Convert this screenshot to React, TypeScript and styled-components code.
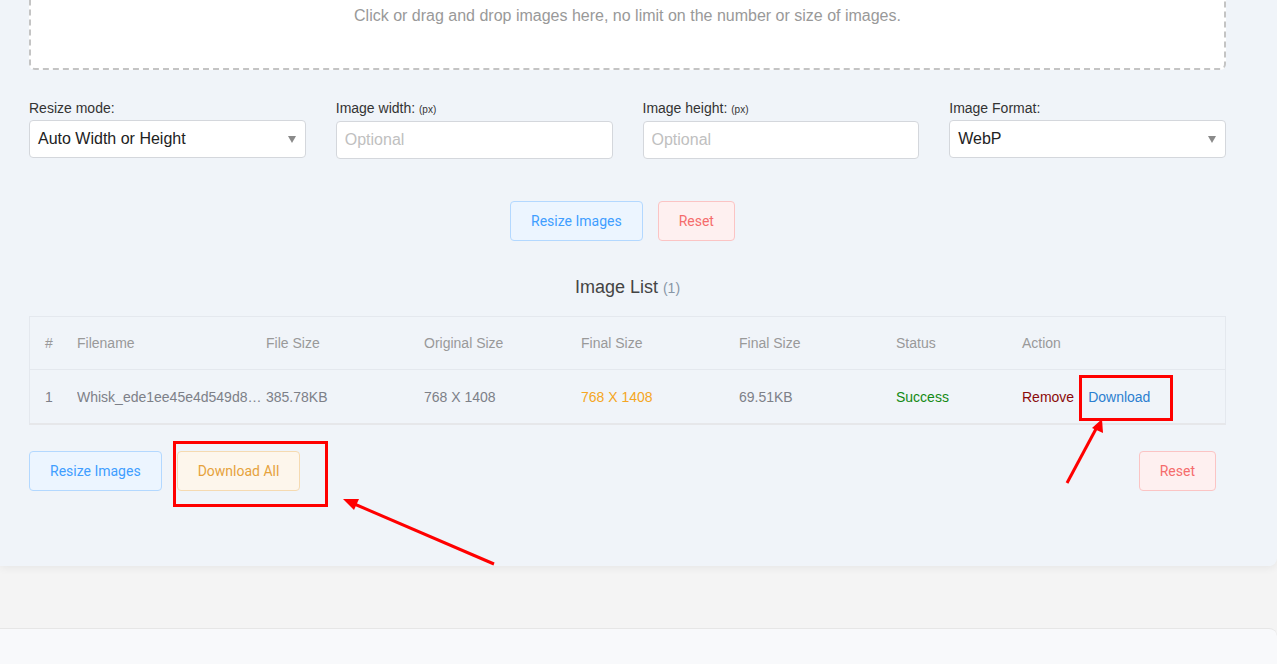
import React from 'react';
import styled, { createGlobalStyle } from 'styled-components';

const GlobalStyle = createGlobalStyle`
  html, body {
    margin: 0;
    padding: 0;
    background: #f4f4f4;
    font-family: "Liberation Sans", Arial, sans-serif;
    overflow: hidden;
  }
`;

type Tone = 'primary' | 'danger' | 'warning';

const tones: Record<Tone, { bg: string; border: string; color: string }> = {
  primary: { bg: '#ecf5ff', border: '#b3d8ff', color: '#409eff' },
  danger: { bg: '#fef0f0', border: '#fbc4c4', color: '#f56c6c' },
  warning: { bg: '#fdf6ec', border: '#f5dab1', color: '#e6a23c' },
};

const columns = ['#', 'Filename', 'File Size', 'Original Size', 'Final Size', 'Final Size', 'Status', 'Action'];

export default function App() {
  return (
    <>
      <GlobalStyle />
      <Page>
        <Card>
          <DropZone>Click or drag and drop images here, no limit on the number or size of images.</DropZone>

          <FormRow>
            <Field>
              <Label>Resize mode:</Label>
              <SelectBox>
                <span>Auto Width or Height</span>
                <Caret />
              </SelectBox>
            </Field>
            <Field>
              <Label>
                Image width: <small>(px)</small>
              </Label>
              <TextInput placeholder="Optional" />
            </Field>
            <Field>
              <Label>
                Image height: <small>(px)</small>
              </Label>
              <TextInput placeholder="Optional" />
            </Field>
            <Field>
              <Label>Image Format:</Label>
              <SelectBox>
                <span>WebP</span>
                <Caret />
              </SelectBox>
            </Field>
          </FormRow>

          <ButtonRow $align="center" $top={42}>
            <Button $tone="primary">Resize Images</Button>
            <Button $tone="danger">Reset</Button>
          </ButtonRow>

          <ListTitle>
            Image List <span>(1)</span>
          </ListTitle>

          <Table>
            <HeadRow>
              {columns.map((c, i) => (
                <Cell key={i}>{c}</Cell>
              ))}
            </HeadRow>
            <BodyRow>
              <Cell>1</Cell>
              <Cell $ellipsis>Whisk_ede1ee45e4d549d8…</Cell>
              <Cell>385.78KB</Cell>
              <Cell>768 X 1408</Cell>
              <Cell $color="#f5a623">768 X 1408</Cell>
              <Cell>69.51KB</Cell>
              <Cell $color="#138a13">Success</Cell>
              <Cell>
                <ActionLink $color="#8b0a0a">Remove</ActionLink>
                <ActionLink $color="#2c7fd0">Download</ActionLink>
              </Cell>
            </BodyRow>
          </Table>

          <ButtonRow $align="space-between" $top={26}>
            <Group>
              <Button $tone="primary">Resize Images</Button>
              <Button $tone="warning">Download All</Button>
            </Group>
            <Button $tone="danger">Reset</Button>
          </ButtonRow>
        </Card>
        <Footer />
      </Page>

      <Annotations width="1277" height="664" viewBox="0 0 1277 664">
        <g fill="none" stroke="#ff0000" strokeWidth="3">
          <rect x="174.5" y="442.5" width="152" height="63" />
          <rect x="1080.5" y="376.5" width="91" height="43" />
          <line x1="494" y1="564" x2="352" y2="503" />
          <line x1="1067" y1="483" x2="1097" y2="427" />
        </g>
        <g fill="#ff0000">
          <polygon points="343,499 359,499 354,510" />
          <polygon points="1102,419 1103,433 1092,428" />
        </g>
      </Annotations>
    </>
  );
}

const Page = styled.div`
  margin-top: -95px;
`;

const Card = styled.div`
  background: #f0f4f9;
  border-radius: 0 8px 8px 0;
  box-shadow: 0 2px 8px rgba(0, 0, 0, 0.06);
  padding: 0 51px 75px 29px;
`;

const DropZone = styled.div`
  height: 165px;
  box-sizing: border-box;
  background: #fff;
  border: 2px dashed #c4c4c4;
  border-top: none;
  border-radius: 0 0 6px 6px;
  color: #999;
  font-size: 16px;
  text-align: center;
  padding-top: 102px;
`;

const FormRow = styled.div`
  display: grid;
  grid-template-columns: repeat(4, 1fr);
  gap: 30px;
  margin-top: 30px;
`;

const Field = styled.div`
  display: flex;
  flex-direction: column;
  gap: 3px;
`;

const Label = styled.label`
  font-size: 14px;
  line-height: 17px;
  color: #333;
  small {
    font-size: 10px;
  }
`;

const SelectBox = styled.div`
  height: 38px;
  box-sizing: border-box;
  border: 1px solid #d4d7dc;
  border-radius: 4px;
  background: #fff;
  display: flex;
  align-items: center;
  justify-content: space-between;
  padding: 0 9px 0 8px;
  font-size: 16px;
  color: #222;
`;

const Caret = styled.span`
  width: 0;
  height: 0;
  border-left: 4px solid transparent;
  border-right: 4px solid transparent;
  border-top: 7px solid #8a8a8a;
`;

const TextInput = styled.input`
  height: 38px;
  box-sizing: border-box;
  border: 1px solid #d4d7dc;
  border-radius: 4px;
  background: #fff;
  padding: 0 9px 0 8px;
  font-family: "Liberation Sans", Arial, sans-serif;
  font-size: 16px;
  color: #222;
  outline: none;
  &::placeholder {
    color: #c0c0c0;
  }
`;

const ButtonRow = styled.div<{ $align: string; $top: number }>`
  display: flex;
  justify-content: ${(p) => p.$align};
  gap: 5px;
  margin-top: ${(p) => p.$top}px;
`;

const Group = styled.div`
  display: flex;
  gap: 5px;
`;

const Button = styled.button<{ $tone: Tone }>`
  height: 40px;
  box-sizing: border-box;
  padding: 0 20px;
  margin-right: 10px;
  border-radius: 4px;
  border: 1px solid ${(p) => tones[p.$tone].border};
  background: ${(p) => tones[p.$tone].bg};
  color: ${(p) => tones[p.$tone].color};
  font-family: Roboto, "Liberation Sans", sans-serif;
  font-size: 14px;
  cursor: pointer;
`;

const ListTitle = styled.h3`
  margin: 34px 0 0;
  text-align: center;
  font-weight: normal;
  font-size: 18px;
  line-height: 24px;
  color: #444;
  span {
    font-size: 14px;
    color: #8896a6;
  }
`;

const Table = styled.div`
  margin-top: 16px;
  border: 1px solid #e4e8ee;
  border-bottom: 2px solid #e6e7ea;
`;

const rowGrid = `
  display: grid;
  grid-template-columns: 32px 189px 158px 157px 158px 157px 126px 1fr;
  align-items: center;
  padding-left: 15px;
  font-size: 14px;
`;

const HeadRow = styled.div`
  ${rowGrid}
  height: 52px;
  color: #999;
  border-bottom: 1px solid #e4e8ee;
`;

const BodyRow = styled.div`
  ${rowGrid}
  height: 53px;
  color: #7d8088;
`;

const Cell = styled.div<{ $color?: string; $ellipsis?: boolean }>`
  color: ${(p) => p.$color || 'inherit'};
  white-space: nowrap;
  ${(p) => (p.$ellipsis ? 'overflow: hidden; text-overflow: ellipsis; padding-right: 4px;' : '')}
`;

const ActionLink = styled.a<{ $color: string }>`
  color: ${(p) => p.$color};
  margin-right: 14px;
  cursor: pointer;
`;

const Footer = styled.div`
  margin-top: 62px;
  height: 60px;
  background: #f8f9fb;
  border-top: 1px solid #e6e6e6;
  border-radius: 0 8px 0 0;
`;

const Annotations = styled.svg`
  position: absolute;
  left: 0;
  top: 0;
  pointer-events: none;
`;
